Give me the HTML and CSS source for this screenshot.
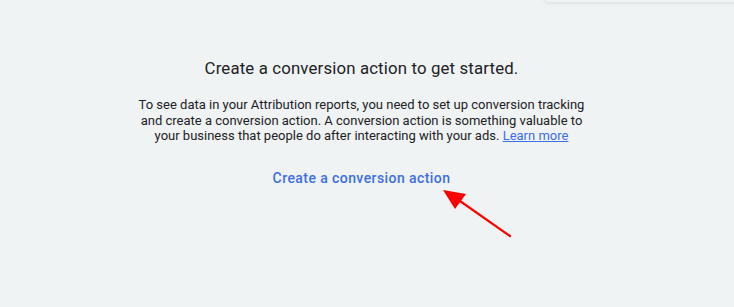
FILE: index.html
```html
<!DOCTYPE html>
<html>
<head>
<meta charset="utf-8">
<link rel="stylesheet" href="styles.css">
</head>
<body>
<div class="page">
  <div class="top-card"></div>
  <div class="empty">
    <h2 class="title">Create a conversion action to get started.</h2>
    <p class="desc">To see data in your Attribution reports, you need to set up conversion tracking<br>and create a conversion action. A conversion action is something valuable to<br>your business that people do after interacting with your ads. <a class="learn" href="#">Learn more</a></p>
    <a class="cta" href="#">Create a conversion action</a>
  </div>
  <svg class="arrow" width="100" height="70" viewBox="0 0 100 70">
    <line x1="80" y1="56" x2="20" y2="14" stroke="#ff0000" stroke-width="2.2" stroke-linecap="round"/>
    <polygon points="13,10 36,14 25,29" fill="#ff0000"/>
  </svg>
</div>
</body>
</html>
```
FILE: styles.css
```css
html, body {
  margin: 0;
  padding: 0;
  background: #f0f3f4;
}
.page {
  position: relative;
  width: 734px;
  height: 307px;
  overflow: hidden;
  font-family: Roboto, "Noto Sans", sans-serif;
}
.top-card {
  position: absolute;
  left: 545px;
  top: -20px;
  width: 200px;
  height: 22px;
  background: #f0f3f4;
  box-shadow: 0 1px 4px rgba(60, 64, 67, 0.12);
  border-radius: 0 0 4px 4px;
}
.empty {
  display: flex;
  flex-direction: column;
  align-items: center;
  padding-top: 56px;
  padding-right: 11px;
  text-align: center;
}
.title {
  margin: 0;
  font-size: 16.8px;
  font-weight: 400;
  color: #202124;
  line-height: 24px;
  letter-spacing: 0.15px;
}
.desc {
  margin: 17px 0 0;
  font-size: 13px;
  line-height: 15.5px;
  color: #202124;
}
.learn {
  color: #3c6ee6;
  text-decoration: underline;
}
.cta {
  margin-top: 26px;
  font-size: 14px;
  font-weight: 500;
  color: #3c6ee6;
  text-decoration: none;
  letter-spacing: 0.42px;
}
.arrow {
  position: absolute;
  left: 430px;
  top: 180px;
}
```
